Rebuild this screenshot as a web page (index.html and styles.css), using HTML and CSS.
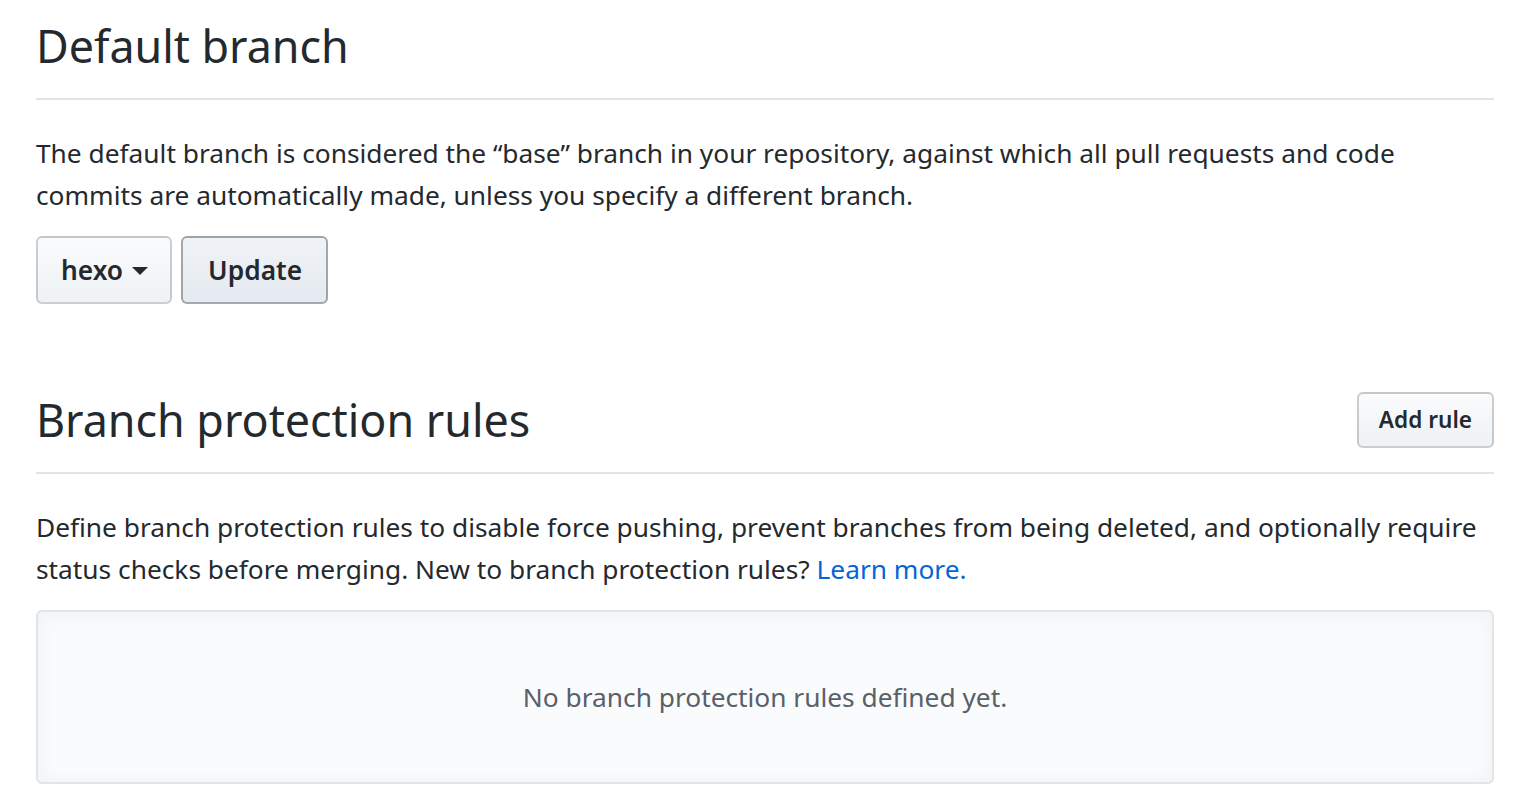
FILE: index.html
```html
<!DOCTYPE html>
<html lang="en">
<head>
<meta charset="utf-8">
<title>Branches</title>
<link rel="stylesheet" href="styles.css">
</head>
<body>
<main class="page">
  <section class="subhead">
    <h2 class="subhead-heading">Default branch</h2>
  </section>
  <p class="note">The default branch is considered the “base” branch in your repository, against which all pull requests and code commits are automatically made, unless you specify a different branch.</p>
  <div class="btn-row">
    <button class="btn btn-select">hexo <span class="caret"></span></button>
    <button class="btn btn-active">Update</button>
  </div>

  <section class="subhead subhead-spacious">
    <h2 class="subhead-heading">Branch protection rules</h2>
    <button class="btn btn-sm">Add rule</button>
  </section>
  <p class="note">Define branch protection rules to disable force pushing, prevent branches from being deleted, and optionally require status checks before merging. New to branch protection rules? <a class="link" href="#">Learn more.</a></p>
  <div class="blankslate">
    <p class="blankslate-text">No branch protection rules defined yet.</p>
  </div>
</main>
</body>
</html>
```

FILE: styles.css
```css
* { box-sizing: border-box; }
html, body { margin: 0; padding: 0; background: #fff; }
body {
  font-family: "Noto Sans", "Open Sans", "Liberation Sans", sans-serif;
  color: #24292e;
  font-size: 26.3px;
  line-height: 42px;
}
.page {
  width: 1458px;
  margin-left: 36px;
  padding-top: 8px;
}
.subhead {
  display: flex;
  align-items: center;
  justify-content: space-between;
  border-bottom: 2px solid #e1e4e8;
  padding-bottom: 14px;
  margin-bottom: 32px;
}
.subhead-spacious { margin-top: 78px; }
.subhead-heading {
  margin: 0;
  font-size: 44.8px;
  line-height: 76px;
  font-weight: 400;
}
.note { margin: 0 0 20px; }
.btn-row { display: flex; gap: 9px; }
.btn {
  font-family: inherit;
  font-size: 26.3px;
  font-weight: 600;
  line-height: 40px;
  color: #24292e;
  padding: 12px 24px;
  border: 2px solid rgba(27,31,35,.2);
  border-radius: 6px;
  background: linear-gradient(180deg, #fafbfc, #eff3f6 90%);
  display: inline-flex;
  align-items: center;
  gap: 10px;
}
.btn-select { padding: 12px 22px 12px 23px; gap: 9px; }
.btn-active {
  background: linear-gradient(180deg, #f0f3f6, #e6ebf1 90%);
  border-color: rgba(27,31,35,.35);
  padding: 12px 24px 12px 25px;
}
.btn-sm {
  font-size: 22.6px;
  line-height: 40px;
  padding: 6px 20px;
}
.caret {
  display: inline-block;
  width: 0; height: 0;
  border-top: 8px solid #24292e;
  border-left: 8px solid transparent;
  border-right: 8px solid transparent;
  margin-top: 2px;
}
.link { color: #0366d6; text-decoration: none; }
.blankslate {
  border: 2px solid #e1e4e8;
  border-radius: 6px;
  background: #fafbfc;
  box-shadow: inset 0 2px 20px rgba(27,31,35,.05);
  padding: 64px 40px;
  text-align: center;
  height: 174px;
}
.blankslate-text { margin: 0; color: #586069; }
```
